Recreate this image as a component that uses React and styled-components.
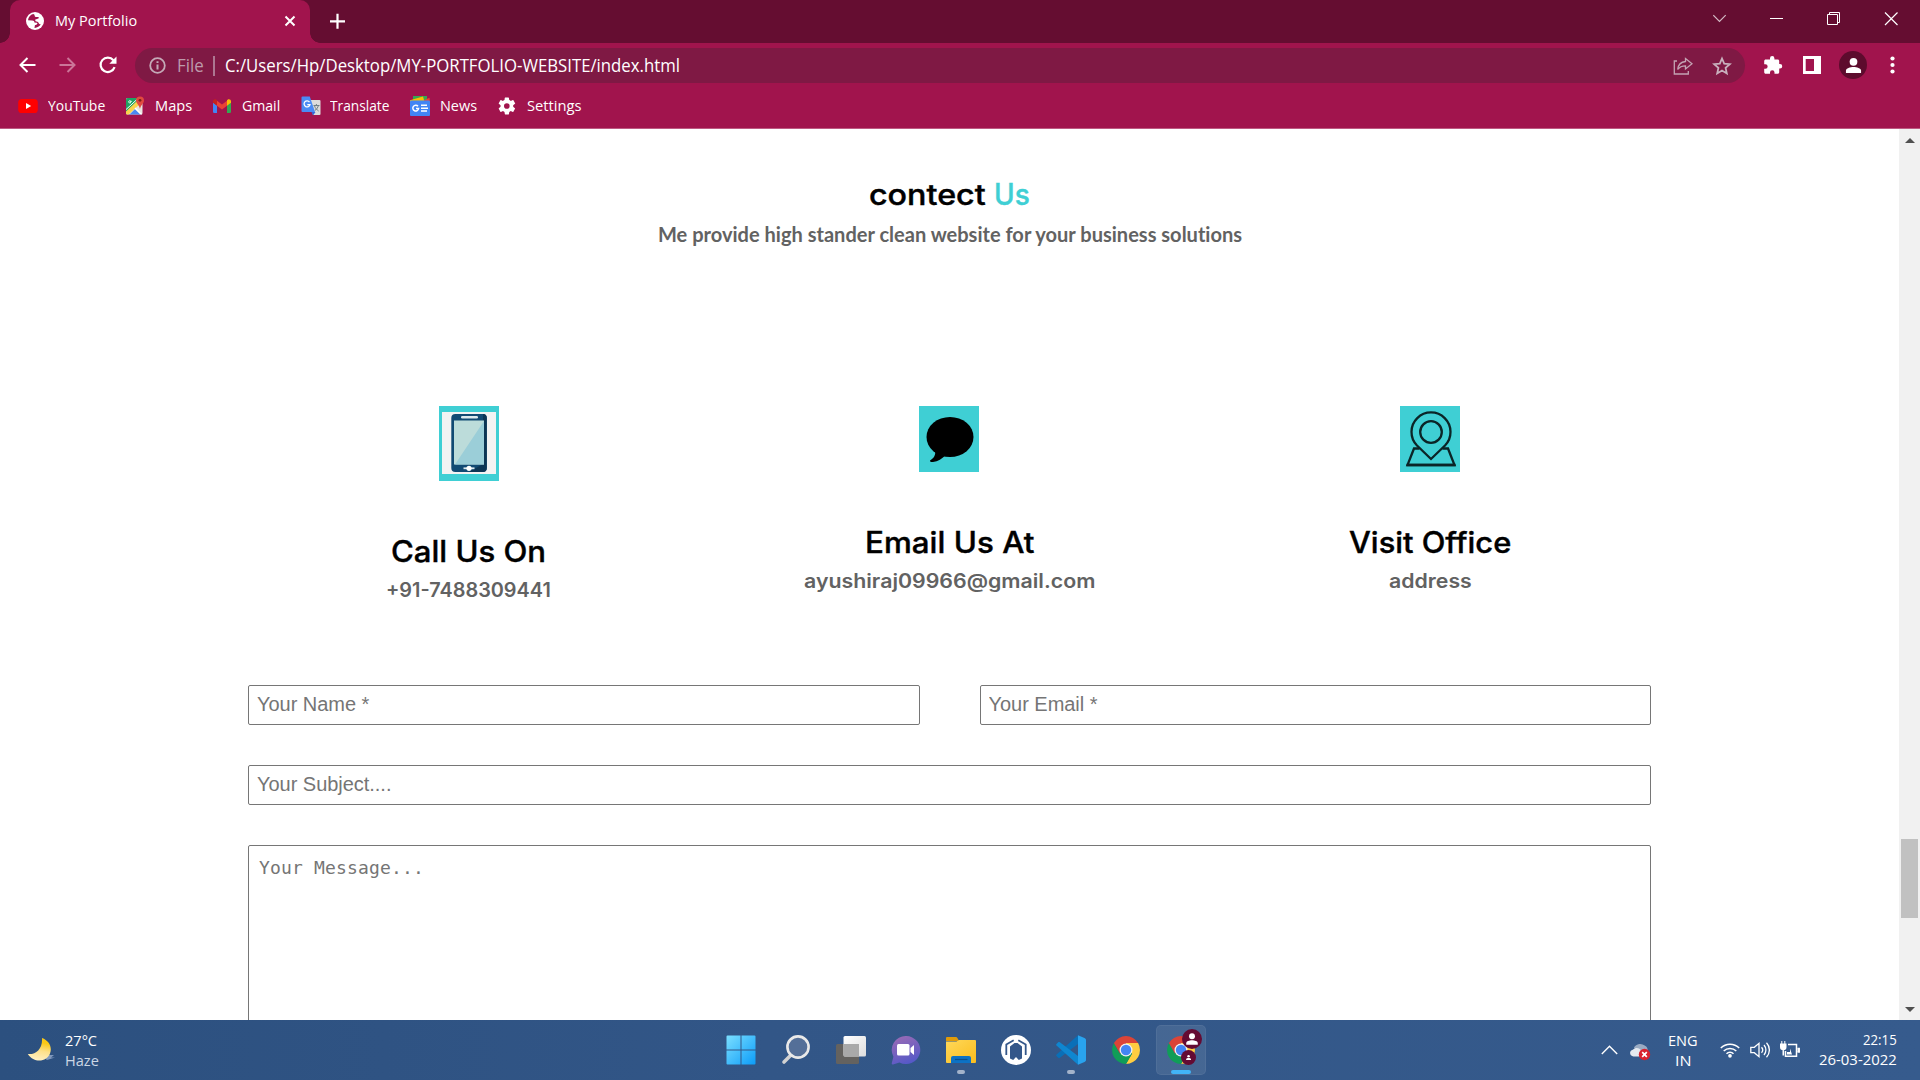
import React, { useLayoutEffect, useRef } from "react";
import styled, { createGlobalStyle } from "styled-components";

const ui = `"Open Sans", "Noto Sans", sans-serif`;
const accent = "#3fcfd4";

const GlobalStyle = createGlobalStyle`
  * { box-sizing: border-box; }
  html, body { margin: 0; overflow: hidden; background: #fff; }
  body { font-family: ${ui}; }
  svg { display: block; flex: none; }
`;

const Line = styled.span`
  display: block;
  flex: none;
  width: ${(p) => p.$w}px;
  white-space: nowrap;
  text-align: left;
`;
const Glyphs = styled.span`
  display: inline-block;
  vertical-align: top;
  transform-origin: 0 50%;
`;

/* A single line of text whose letters are widened or condensed to the given width. */
function Track({ w, children }) {
  const ref = useRef(null);
  useLayoutEffect(() => {
    const inner = ref.current;
    inner.style.transform = `scaleX(${w / inner.offsetWidth})`;
  }, [w, children]);
  return (
    <Line $w={w}>
      <Glyphs ref={ref}>{children}</Glyphs>
    </Line>
  );
}

const Screen = styled.div`
  width: 1920px;
  height: 1080px;
  display: flex;
  flex-direction: column;
  overflow: hidden;
`;

/* ---------- browser chrome ---------- */
const TabStrip = styled.header`
  height: 43px;
  display: flex;
  background: #650d31;
  padding-left: 10px;
`;
const Tab = styled.div`
  position: relative;
  width: 300px;
  height: 43px;
  display: flex;
  align-items: center;
  padding: 0 14px 1px 16px;
  border-radius: 10px 10px 0 0;
  background: #a1144d;
  color: #fff;
  font-size: 15px;
  line-height: 20px;
  &::before,
  &::after {
    content: "";
    position: absolute;
    bottom: 0;
    width: 10px;
    height: 10px;
  }
  &::before {
    left: -10px;
    background: radial-gradient(circle at 0 0, transparent 9.5px, #a1144d 10px);
  }
  &::after {
    right: -10px;
    background: radial-gradient(circle at 100% 0, transparent 9.5px, #a1144d 10px);
  }
`;
const TabTitle = styled.div`
  flex: 1;
  padding: 0 0 2px 10.5px;
`;
const NewTab = styled.div`
  padding: 13px 0 0 20px;
`;
const WindowControls = styled.div`
  display: flex;
  align-items: flex-start;
  gap: 43px;
  margin-left: auto;
  padding: 12px 22px 0 0;
`;
const Toolbar = styled.div`
  height: 44px;
  display: flex;
  align-items: center;
  background: #a1144d;
  padding: 0 20px 0 18px;
`;
const NavButtons = styled.div`
  display: flex;
  gap: 20px;
  width: 117px;
`;
const AddressBar = styled.div`
  width: 1610px;
  height: 35px;
  margin-top: 1px;
  display: flex;
  align-items: center;
  border-radius: 18px;
  background: #7f1944;
  padding: 0 13px 0 14px;
  color: #fff;
  font-size: 17.5px;
  line-height: 24px;
  & > span { padding-bottom: 2px; }
`;
const Scheme = styled.span`
  color: #bd9aab;
  padding-left: 11px;
`;
const Divider = styled.span`
  width: 2px;
  height: 20px;
  margin: 0 10px 0 9px;
  background: #ad7791;
`;
const AddressActions = styled.div`
  display: flex;
  align-items: center;
  gap: 19px;
  margin-left: auto;
`;
const ToolbarActions = styled.div`
  display: flex;
  align-items: center;
  padding-left: 18px;
`;
const PanelIcon = styled.svg`
  margin-left: 20px;
`;
const Avatar = styled.div`
  width: 28px;
  height: 28px;
  margin: 0 23px 0 18px;
  border-radius: 50%;
  background: #5d0b2d;
  display: grid;
  place-items: center;
`;
const Bookmarks = styled.nav`
  height: 42px;
  display: flex;
  align-items: center;
  gap: 20.4px;
  padding: 0 18px 4px;
  background: #a1144d;
  border-bottom: 1px solid #bd5a82;
`;
const Bookmark = styled.div`
  display: flex;
  align-items: center;
  gap: 9.5px;
  color: #fff;
  font-size: 15px;
  line-height: 20px;
  & > span { padding-bottom: 2px; }
`;

/* ---------- page ---------- */
const Viewport = styled.div`
  height: 891px;
  display: flex;
`;
const Page = styled.main`
  width: 1899px;
  height: 891px;
  overflow: hidden;
  display: flex;
  flex-direction: column;
  align-items: center;
  padding-top: 43px;
`;
const Title = styled.h1`
  margin: 0;
  display: flex;
  gap: 8px;
  font: 500 29.5px/45px Inter, sans-serif;
  -webkit-text-stroke: 0.4px;
  color: #000;
`;
const Accent = styled.span`
  color: ${accent};
`;
const Subtitle = styled.p`
  margin: 2px 0 157px;
  font: 700 20px/30px Lato, sans-serif;
  font-variant-ligatures: none;
  color: #626262;
`;
const Cards = styled.section`
  width: 1443px;
  display: grid;
  grid-template-columns: 481px 480px 482px;
  align-items: start;
`;
const Card = styled.article`
  display: flex;
  flex-direction: column;
  align-items: center;
`;
const CardIcon = styled.div`
  width: 60px;
  height: ${(p) => p.$h}px;
  background: ${accent};
`;
const CardTitle = styled.h2`
  margin: 50px 0 4px;
  font: 500 29.5px/40px Inter, sans-serif;
  -webkit-text-stroke: 0.4px;
  color: #000;
`;
const CardText = styled.p`
  margin: 0;
  font: 600 19.5px/30px Inter, sans-serif;
  color: #626262;
`;
const Form = styled.form`
  width: 1403px;
  margin-top: 80px;
  display: grid;
  grid-template-columns: 1fr 1fr;
  gap: 40px 60px;
`;
const Field = styled.input`
  grid-column: ${(p) => (p.$wide ? "1 / -1" : "auto")};
  width: 100%;
  height: 40px;
  border: 1px solid #767676;
  border-radius: 2px;
  padding: 0 8px 2px;
  font: 20px "Liberation Sans", Arial, sans-serif;
  letter-spacing: -0.03px;
  &::placeholder { color: #757575; }
`;
const Message = styled.textarea`
  grid-column: 1 / -1;
  height: 240px;
  border: 1px solid #767676;
  border-radius: 2px;
  padding: 10px;
  resize: none;
  font: 18px/24px "DejaVu Sans Mono", monospace;
  letter-spacing: 0.16px;
  &::placeholder { color: #757575; }
`;
const Scrollbar = styled.aside`
  width: 21px;
  display: flex;
  flex-direction: column;
  align-items: center;
  justify-content: space-between;
  background: #f1f1f1;
  padding: 9px 0 8px;
`;
const Thumb = styled.div`
  width: 17px;
  height: 79px;
  margin-top: 606px;
  background: #c1c1c1;
`;
const ArrowMark = styled.div`
  width: 0;
  border: 5px solid transparent;
  border-top: ${(p) => (p.$up ? "0" : "5px solid #505050")};
  border-bottom: ${(p) => (p.$up ? "5px solid #505050" : "0")};
`;

/* ---------- taskbar ---------- */
const Taskbar = styled.footer`
  height: 60px;
  display: grid;
  grid-template-columns: 715.5px 490px 1fr;
  background: linear-gradient(90deg, #2c507f, #325687 40%, #365b8d);
  color: #fff;
  font-size: 15px;
  line-height: 20px;
`;
const Weather = styled.div`
  display: flex;
  align-items: center;
  gap: 9px;
  padding-left: 27px;
`;
const Stack = styled.div`
  display: flex;
  flex-direction: column;
  align-items: ${(p) => p.$align || "flex-start"};
  padding-bottom: ${(p) => p.$lift || 0}px;
`;
const Muted = styled.div`
  color: #ccd7e5;
`;
const Apps = styled.div`
  display: flex;
  align-items: center;
  gap: 5px;
`;
const AppTile = styled.div`
  position: relative;
  width: 50px;
  height: 50px;
  display: grid;
  place-items: center;
  border-radius: 5px;
  background: ${(p) => (p.$active ? "rgba(255,255,255,.09)" : "transparent")};
  box-shadow: ${(p) => (p.$active ? "inset 0 0 0 1px rgba(255,255,255,.06)" : "none")};
`;
const Indicator = styled.i`
  position: absolute;
  bottom: 1px;
  left: 50%;
  width: ${(p) => (p.$active ? 20 : 8)}px;
  height: 4px;
  margin-left: ${(p) => (p.$active ? -10 : -4)}px;
  border-radius: 2px;
  background: ${(p) => (p.$active ? "#42b4f7" : "#a3b3ca")};
`;
const Tray = styled.div`
  display: flex;
  align-items: center;
  justify-content: flex-end;
  padding-right: 23.5px;
`;
const CloudIcon = styled.svg`
  margin: 2px 17px 0 11px;
`;
const TrayIcons = styled.div`
  display: flex;
  gap: 10px;
  margin: 0 19.5px 0 22px;
`;

/* ---------- icons ---------- */
const Person = ({ size = 18 }) => (
  <svg width={size} height={size} viewBox="0 0 18 18" fill="#fff">
    <circle cx="9" cy="5.1" r="4.1" />
    <path d="M1 17v-2.4C1 11.8 5.5 10.6 9 10.6s8 1.2 8 4V17z" />
  </svg>
);

const Globe = () => (
  <svg width="18" height="18" viewBox="0 0 18 18">
    <circle cx="9" cy="9" r="9" fill="#fff" />
    <path d="M7.2 2.1C4.4 2.8 2.3 5.2 2 8.3l4.2.2c1.5.1 2.3.9 2.2 2l2.3.2c.9.2.8 1.2.1 1.8l-1.9.8-.4 2.6c2.7.1 5-1.4 6.3-3.6-.9.1-1.7-.3-2-1.1-.4-1-1.3-1.6-2.9-1.6l-1-1.8c1.6-.2 2.2-1.1 3.6-1.2l.2-1.7c-1.7.3-3.3.2-3.9-.7-.5-.8.4-1.6-1.6-2.1z" fill="#a1144d" />
  </svg>
);

const Chrome = ({ size = 28 }) => (
  <svg width={size} height={size} viewBox="0 0 28 28">
    <path d="M14 14V7h12.1A14 14 0 0 1 14 28l6.1-10.5z" fill="#ffcd40" />
    <path d="M14 14l6.1 3.5L14 28A14 14 0 0 1 1.9 7l6 10.5z" fill="#109d58" />
    <path d="M1.9 7A14 14 0 0 1 26.1 7H14z" fill="#db4437" />
    <path d="M1.9 7 8 17.4 14 7z" fill="#db4437" />
    <circle cx="14" cy="14" r="6.5" fill="#f1f1f1" />
    <circle cx="14" cy="14" r="5.2" fill="#4285f4" />
  </svg>
);

const icons = {
  youtube: (
    <svg width="20" height="20" viewBox="0 0 20 20">
      <rect x="0.2" y="3" width="19.6" height="14" rx="3.6" fill="#f00" />
      <path d="M8 7v6l5.2-3z" fill="#fff" />
    </svg>
  ),
  maps: (
    <svg width="20" height="20" viewBox="0 0 20 20">
      <clipPath id="mapClip"><rect x="1" y="2" width="16.5" height="16.5" rx="1.5" /></clipPath>
      <g clipPath="url(#mapClip)">
        <path d="M1 2h17v17H1z" fill="#e8e6e0" />
        <path d="M1 2h16L1 17z" fill="#1fa463" />
        <path d="M4 19l6-6 6 6z" fill="#4a89f3" />
        <path d="M1 15.5 13 4l3 3L3 19H1z" fill="#fbd34c" />
        <path d="M0 14.5 14 1.5" stroke="#fff" strokeWidth="1" />
        <path d="m10 12 7 7" stroke="#fff" strokeWidth="1.4" />
      </g>
      <path d="M6.9 5.4H5.2v1h.7a1.2 1.2 0 1 1-.2-1.4" fill="none" stroke="#fff" strokeWidth=".8" />
      <path d="M15 .4a4 4 0 0 1 4 4c0 3-3.2 4-4 8.6-.8-4.6-4-5.6-4-8.6a4 4 0 0 1 4-4z" fill="#e04a3f" />
      <circle cx="15" cy="4.3" r="1.4" fill="#7c2119" />
    </svg>
  ),
  gmail: (
    <svg width="20" height="20" viewBox="0 0 20 20">
      <path d="M1 6.5l4 3V17H2.2A1.2 1.2 0 0 1 1 15.8z" fill="#4285f4" />
      <path d="M19 6.5l-4 3V17h2.8a1.2 1.2 0 0 0 1.2-1.2z" fill="#34a853" />
      <path d="M5 4.8l5 3.8 5-3.8v5L10 13.5 5 9.8z" fill="#ea4335" />
      <path d="M1 5.3C1 3.3 3.2 2.7 4.4 3.7l.6.5v5.5L1 6.8z" fill="#c5221f" />
      <path d="M19 5.3c0-2-2.2-2.6-3.4-1.6l-.6.5v5.5l4-2.9z" fill="#fbbc04" />
    </svg>
  ),
  translate: (
    <svg width="20" height="20" viewBox="0 0 20 20">
      <path d="M8 4h10.5a1 1 0 0 1 1 1v13a1 1 0 0 1-1 1H12z" fill="#dcdcdc" />
      <path d="M10.5 16h4L12 19.5z" fill="#3367d6" />
      <path d="M1.5.6h7.3L14 16H1.5a1 1 0 0 1-1-1V1.6a1 1 0 0 1 1-1z" fill="#4a8bf5" />
      <path d="M8.5 6.1A3 3 0 1 0 9 8.6H6.3" fill="none" stroke="#fff" strokeWidth="1.3" />
      <path d="M12.5 9.5h6M15.4 8v1.5M17.4 9.5c-.4 2-2 4-3.6 5M13.6 10c.5 2 2.4 4 4 5" fill="none" stroke="#6e7f87" strokeWidth="1" />
    </svg>
  ),
  news: (
    <svg width="20" height="20" viewBox="0 0 20 20">
      <path d="M3 0h14v5H3z" fill="#35a853" />
      <path d="M19.5 1.7 20 6H10z" fill="#ea4335" />
      <path d="M0 4.3 13 .6 14.5 6H0z" fill="#fbbc04" />
      <rect y="4.6" width="20" height="15.4" rx="1" fill="#4285f4" />
      <path d="M8 10.3a2.9 2.9 0 1 0 .6 2.2H6" fill="none" stroke="#fff" strokeWidth="1.5" />
      <path d="M11 9.3h6M11 12.2h7M11 15.1h6" stroke="#fff" strokeWidth="1.5" />
    </svg>
  ),
  settings: (
    <svg width="20" height="20" viewBox="0 0 24 24">
      <path fill="#fff" fillRule="evenodd" d="M19.4 13a7.5 7.5 0 0 0 0-2l2.2-1.7c.2-.2.3-.5.1-.7l-2-3.5a.5.5 0 0 0-.7-.2l-2.5 1a7.5 7.5 0 0 0-1.8-1L14.3 2.3a.5.5 0 0 0-.5-.4h-4a.5.5 0 0 0-.5.4L9 4.9c-.6.2-1.2.6-1.8 1l-2.5-1a.5.5 0 0 0-.6.2l-2 3.5c-.1.2-.1.5.1.7L4.3 11a7.5 7.5 0 0 0 0 2l-2.1 1.7c-.2.2-.3.5-.1.7l2 3.5c.1.2.4.3.6.2l2.5-1c.5.4 1.2.8 1.8 1l.4 2.6c0 .3.2.4.5.4h4c.2 0 .4-.2.5-.4l.3-2.6a7.5 7.5 0 0 0 1.8-1l2.5 1c.2.1.5 0 .6-.2l2-3.5c.1-.2.1-.5-.1-.7zM11.8 15.4a3.4 3.4 0 1 1 0-6.8 3.4 3.4 0 0 1 0 6.8z" />
    </svg>
  ),
};

const bookmarks = [
  ["youtube", "YouTube", 57.5],
  ["maps", "Maps", 37],
  ["gmail", "Gmail", 38.5],
  ["translate", "Translate", 59.5],
  ["news", "News", 37.5],
  ["settings", "Settings", 55],
];

const PhonePicture = () => (
  <svg width="60" height="75" viewBox="0 0 60 75">
    <rect x="3" y="6" width="54" height="62" fill="#f3f3f3" />
    <rect x="12.3" y="8" width="35.5" height="58" rx="4" fill="#114a73" />
    <path d="M44 8a4 4 0 0 1 3.8 4v50a4 4 0 0 1-4 4H30l14-8z" fill="#0c3554" />
    <rect x="15" y="14.5" width="30" height="44" fill="#bcdcda" />
    <path d="M45 15v43.5H16z" fill="#9bced8" />
    <rect x="22" y="10" width="17" height="2.6" rx="1.3" fill="#dce9ee" />
    <path d="M24.5 62.3h11" stroke="#dce9ee" strokeWidth="1.8" />
    <circle cx="30" cy="62.3" r="2.6" fill="#fff" />
  </svg>
);
const BubblePicture = () => (
  <svg width="60" height="66" viewBox="0 0 60 66">
    <ellipse cx="31" cy="31" rx="23.5" ry="20" />
    <path d="M16 44c1 5-1 8-5 10.5 0 1.5 1 1.6 3 1.5 5-.5 9-3.5 13-7z" />
  </svg>
);
const PinPicture = () => (
  <svg width="60" height="66" viewBox="0 0 60 66" fill="none" stroke="#0b2527" strokeWidth="2.3">
    <circle cx="31" cy="26" r="10.8" />
    <path d="M31 53 17 39.5a19.5 19.5 0 1 1 28 0z" />
    <path d="M19.5 42.500H14L7.5 59h47L48 42.500h-5.500" />
    <path d="M6.5 59h49" strokeWidth="2.5" />
  </svg>
);

const contacts = [
  { h: 75, picture: <PhonePicture />, title: "Call Us On", tw: 155, text: "+91-7488309441", w: 165 },
  { h: 66, picture: <BubblePicture />, title: "Email Us At", tw: 169, text: "ayushiraj09966@gmail.com", w: 291 },
  { h: 66, picture: <PinPicture />, title: "Visit Office", tw: 162, text: "address", w: 83 },
];

const appIcons = [
  <svg width="30" height="30" viewBox="0 0 30 30">
    <defs><linearGradient id="win" gradientUnits="userSpaceOnUse" x1="0" y1="0" x2="30" y2="30"><stop stopColor="#7de0ff" /><stop offset="1" stopColor="#0a9bf8" /></linearGradient></defs>
    <path fill="url(#win)" d="M1.5.5h13v14h-14v-13a1 1 0 0 1 1-1zM15.5.5h13a1 1 0 0 1 1 1v13h-14zM.5 15.5h14v14h-13a1 1 0 0 1-1-1zM15.5 15.5h14v13a1 1 0 0 1-1 1h-13z" />
  </svg>,
  <svg width="30" height="30" viewBox="0 0 30 30" fill="none">
    <path d="M10.5 19.5 3 27" stroke="#d2d2d2" strokeWidth="3.6" strokeLinecap="round" />
    <circle cx="17" cy="12" r="10.6" fill="#546f98" stroke="#e9e9e9" strokeWidth="2.6" />
  </svg>,
  <svg width="30" height="30" viewBox="0 0 30 30">
    <defs>
      <linearGradient id="tv" x1="0" y1="0" x2="1" y2="1"><stop stopColor="#fff" /><stop offset="1" stopColor="#ddd" /></linearGradient>
    </defs>
    <rect y="9" width="23" height="20" rx="1.5" fill="#64625f" />
    <rect x="7.5" y="1" width="22.5" height="20.5" rx="1.5" fill="url(#tv)" />
    <path d="M7.5 9H23v12.5H9A1.5 1.5 0 0 1 7.5 20z" fill="#a9a9a9" />
  </svg>,
  <svg width="30" height="30" viewBox="0 0 30 30">
    <defs><linearGradient id="chat" x1=".2" y1="0" x2=".6" y2="1"><stop stopColor="#9a6bb5" /><stop offset="1" stopColor="#5358c8" /></linearGradient></defs>
    <path d="M15 1a14.2 14 0 1 1-6.5 26.4L2 29.4c-1 .2-1.5-.5-1.2-1.4l1.6-6.3A14 14 0 0 1 15 1z" fill="url(#chat)" />
    <rect x="6" y="9" width="12.5" height="11.5" rx="1.5" fill="#fff" />
    <path d="M19.5 13l3.5-3v10l-3.5-3z" fill="#fff" />
  </svg>,
  <svg width="30" height="30" viewBox="0 0 30 30">
    <defs>
      <linearGradient id="fold" x1="0" y1="0" x2="1" y2="1"><stop stopColor="#ffd85a" /><stop offset="1" stopColor="#fbbd1d" /></linearGradient>
    </defs>
    <path d="M0 3a1 1 0 0 1 1-1h8.5c1 0 1.5.4 2.2 1.4L13 6H0z" fill="#df9b0a" />
    <path d="M0 6.5h10.5L13 5h16a1 1 0 0 1 1 1v21a1 1 0 0 1-1 1H1a1 1 0 0 1-1-1z" fill="url(#fold)" />
    <path d="M5 28v-5a2 2 0 0 1 2-2h16a2 2 0 0 1 2 2v5z" fill="#0d72c4" />
    <path d="M9 24.5h12.5" stroke="#0a4f8d" strokeWidth="1.2" />
  </svg>,
  <svg width="30" height="30" viewBox="0 0 30 30">
    <circle cx="15" cy="15" r="15" fill="#fff" />
    <path d="M9 23.5V11.500L13.500 8h3L21 11.500v12L17.800 25 15 22l-2.800 3z" fill="#34578a" />
    <path d="M12.700 5.200 5.300 9.500v10.500M17.300 5.200l7.400 4.300v10.500" fill="none" stroke="#34578a" strokeWidth="1.8" />
  </svg>,
  <svg width="30" height="30" viewBox="0 0 30 30">
    <path d="M22 .2.5 19.4c-.5.5-.5 1.2 0 1.7l1.7 1.7c.5.4 1.2.4 1.7 0L22 9z" fill="#0a6fb7" />
    <path d="M22 29.8.5 10.6c-.5-.5-.5-1.2 0-1.7l1.7-1.7c.5-.4 1.2-.4 1.7 0L22 21z" fill="#0f86d0" />
    <path d="M22 .2 28.5 3c1 .5 1.5 1.2 1.5 2.2v19.6c0 1-.5 1.7-1.5 2.2L22 29.8z" fill="#29a3ee" />
  </svg>,
  <Chrome />,
  <svg width="50" height="50" viewBox="0 0 50 50">
    <g transform="translate(11 11)"><Chrome /></g>
    <circle cx="36" cy="14" r="10" fill="#640b33" />
    <g transform="translate(29.5 7.5)"><Person size={13} /></g>
    <circle cx="32.5" cy="32.5" r="7.5" fill="#640b33" />
    <g transform="translate(29.8 29.8)"><Person size={5.5} /></g>
  </svg>,
];

export default function App() {
  return (
    <Screen>
      <GlobalStyle />
      <TabStrip>
        <Tab>
          <Globe />
          <TabTitle><Track w={82}>My Portfolio</Track></TabTitle>
          <svg width="12" height="12" viewBox="0 0 12 12" stroke="#fff" strokeWidth="2"><path d="M1.5 1.5l9 9M10.5 1.5l-9 9" /></svg>
        </Tab>
        <NewTab>
          <svg width="15" height="16" viewBox="0 0 15 16" stroke="#fff" strokeWidth="2.2"><path d="M7.5 .8v15M0 8.3h15" /></svg>
        </NewTab>
        <WindowControls>
          <svg width="14" height="14" viewBox="0 0 14 14" fill="none" stroke="#d3bac5" strokeWidth="1.2"><path d="M.3 3.2 6.5 9.5l6.2-6.3" /></svg>
          <svg width="14" height="14" viewBox="0 0 14 14" stroke="#fff"><path d="M0 6.5h13" /></svg>
          <svg width="14" height="14" viewBox="0 0 14 14" fill="none" stroke="#fff"><path d="M.5 2.5h10v10H.5zM2.5 2.5v-2h10v10h-2" /></svg>
          <svg width="14" height="14" viewBox="0 0 14 14" stroke="#fff" strokeWidth="1.2"><path d="M1 .5l12.5 12.5M13.5.5 1 13" /></svg>
        </WindowControls>
      </TabStrip>
      <Toolbar>
        <NavButtons>
          <svg width="20" height="20" viewBox="0 0 20 20" fill="none" stroke="#fff" strokeWidth="2"><path d="M17.5 10H3M9.5 3 2.5 10l7 7" /></svg>
          <svg width="20" height="20" viewBox="0 0 20 20" fill="none" stroke="#cb7598" strokeWidth="2"><path d="M1.5 10H16M9.5 3l7 7-7 7" /></svg>
          <svg width="20" height="20" viewBox="0 0 20 20" fill="none" stroke="#fff" strokeWidth="2.2"><path d="M16.6 12.2A7.2 7.2 0 1 1 15.4 5.3" /><path d="M18.5 1.6v7.2h-7.2z" fill="#fff" stroke="none" /></svg>
        </NavButtons>
        <AddressBar>
          <svg width="17" height="17" viewBox="0 0 17 17" fill="none" stroke="#c4a9b7" strokeWidth="1.8"><circle cx="8.5" cy="8.5" r="7.3" /><path d="M8.5 7.5v5M8.5 4.2V6" strokeWidth="2" /></svg>
          <Scheme><Track w={27}>File</Track></Scheme>
          <Divider />
          <Track w={455}>C:/Users/Hp/Desktop/MY-PORTFOLIO-WEBSITE/index.html</Track>
          <AddressActions>
            <svg width="20" height="20" viewBox="0 0 20 20" fill="none" stroke="#c4a3b3" strokeWidth="1.3"><path d="M4 5H1.3v13h14v-3" /><path d="M12.5 2.5 19 7.7l-6.5 5.2V9.8c-3.5 0-6 1-7.8 3.7.4-4.5 3-7.5 7.8-8z" /></svg>
            <svg width="20" height="20" viewBox="0 0 20 20" fill="none" stroke="#c9b0bd" strokeWidth="1.8"><path d="m10 2.5 2.2 5.2 5.6.5-4.2 3.7 1.2 5.5L10 14.5l-4.8 2.9 1.2-5.5L2.2 8.2l5.6-.5z" /></svg>
          </AddressActions>
        </AddressBar>
        <ToolbarActions>
          <svg width="20" height="20" viewBox="0 0 20 20" fill="#fff"><path d="M7 3.3a2.2 2.2 0 0 1 4.4 0V4.5h3.3c.8 0 1.5.6 1.5 1.5v3h.8a2.2 2.2 0 0 1 0 4.5h-.8v3.7c0 .8-.7 1.5-1.5 1.5h-3.2v-1.2a2.2 2.2 0 0 0-4.5 0v1.2H2.7c-.8 0-1.5-.7-1.5-1.5v-3.4h1.2a2.2 2.2 0 0 0 0-4.5H1.2V6c0-.9.7-1.5 1.5-1.5H7z" /></svg>
          <PanelIcon width="18" height="18" viewBox="0 0 18 18"><path fill="#fff" fillRule="evenodd" d="M0 0h18v18H0zM2.7 3v12h8.3V3z" /></PanelIcon>
          <Avatar><Person size={17} /></Avatar>
          <svg width="5" height="18" viewBox="0 0 5 18" fill="#fff"><circle cx="2.5" cy="2.5" r="2.1" /><circle cx="2.5" cy="9" r="2.1" /><circle cx="2.5" cy="15.5" r="2.1" /></svg>
        </ToolbarActions>
      </Toolbar>
      <Bookmarks>
        {bookmarks.map(([icon, label, w]) => (
          <Bookmark key={label}>
            {icons[icon]}
            <Track w={w}>{label}</Track>
          </Bookmark>
        ))}
      </Bookmarks>

      <Viewport>
        <Page>
          <Title>
            <Track w={117}>contect</Track>
            <Accent><Track w={36}>Us</Track></Accent>
          </Title>
          <Subtitle><Track w={584}>Me provide high stander clean website for your business solutions</Track></Subtitle>
          <Cards>
            {contacts.map((c) => (
              <Card key={c.title}>
                <CardIcon $h={c.h}>{c.picture}</CardIcon>
                <CardTitle><Track w={c.tw}>{c.title}</Track></CardTitle>
                <CardText><Track w={c.w}>{c.text}</Track></CardText>
              </Card>
            ))}
          </Cards>
          <Form>
            <Field placeholder="Your Name *" />
            <Field placeholder="Your Email *" />
            <Field $wide placeholder="Your Subject...." />
            <Message placeholder="Your Message..." />
          </Form>
        </Page>
        <Scrollbar>
          <ArrowMark $up />
          <Thumb />
          <ArrowMark />
        </Scrollbar>
      </Viewport>

      <Taskbar>
        <Weather>
          <svg width="29" height="28" viewBox="0 0 29 28">
            <defs><linearGradient id="moon" x1=".6" y1="0" x2=".4" y2="1"><stop offset=".2" stopColor="#fbc916" /><stop offset=".55" stopColor="#fde08a" /><stop offset="1" stopColor="#fff0c4" /></linearGradient></defs>
            <path d="M14 19h13l-3 2.5h4L20 24z" fill="#8098bd" />
            <path d="M15 2c7 2.5 10.5 9 8 15.5C20.5 25 8 28.5.8 18 8.5 19 15.8 13 15 2z" fill="url(#moon)" />
          </svg>
          <Stack $lift={1}>
            <Track w={32}>27°C</Track>
            <Muted><Track w={34}>Haze</Track></Muted>
          </Stack>
        </Weather>
        <Apps>
          {appIcons.map((icon, i) => (
            <AppTile key={i} $active={i === 8}>
              {icon}
              {(i === 4 || i === 6 || i === 8) && <Indicator $active={i === 8} />}
            </AppTile>
          ))}
        </Apps>
        <Tray>
          <svg width="17" height="10" viewBox="0 0 17 10" fill="none" stroke="#fff" strokeWidth="1.4"><path d="M.8 9 8.5 1.3 16.2 9" /></svg>
          <CloudIcon width="22" height="20" viewBox="0 0 22 20">
            <path d="M5 6.5A7 6 0 0 1 16.5 5c3 2 2.5 6 .5 7.5H8z" fill="#9aabc3" />
            <path d="M4.5 15.5C.5 15.5-.3 9.8 3.8 8.8 7 5.5 11 7 12 9.5l6 2.5-3 3.5z" fill="#e4e9ef" />
            <circle cx="15.5" cy="13.5" r="5.7" fill="#d9222f" />
            <path d="m13.2 11.2 4.6 4.6M17.8 11.2l-4.6 4.6" stroke="#fff" strokeWidth="1.7" />
          </CloudIcon>
          <Stack $align="center" $lift={1}>
            <Track w={30}>ENG</Track>
            <Track w={16}>IN</Track>
          </Stack>
          <TrayIcons>
            <svg width="20" height="20" viewBox="0 0 20 20" fill="none" stroke="#fff" strokeWidth="1.5"><path d="M.8 8a13 13 0 0 1 18.4 0M3.7 11a9 9 0 0 1 12.6 0M6.5 13.8a5 5 0 0 1 7 0" /><circle cx="10" cy="15.8" r="1.1" fill="#fff" /></svg>
            <svg width="20" height="20" viewBox="0 0 20 20" fill="none" stroke="#fff" strokeWidth="1.3"><path d="M.8 7.3v5.4h3.5l4.7 4V3.3l-4.7 4z" /><path d="M11.5 7.3a4 4 0 0 1 0 5.4M14 5a7.5 7.5 0 0 1 0 10M16.5 2.8a10.5 10.5 0 0 1 0 14.4" /></svg>
            <svg width="20" height="20" viewBox="0 0 20 20" fill="none" stroke="#fff" strokeWidth="1.5"><path d="M8 4.5h8.5v11.7H5.5V11" /><path d="M17.5 8.5h1.7v3.5h-1.7" fill="#fff" /><path d="M0 3.5h6.5V7a3 3 0 0 1-6.5 0zM2.5 9h1.6v6.5H2.5zM1.3 1h1v3h-1zM4.3 1h1v3h-1z" fill="#fff" stroke="none" /><path d="M7 12h3V8.5L12 14.5H7z" fill="#fff" stroke="none" /></svg>
          </TrayIcons>
          <Stack $align="flex-end" $lift={2}>
            <Track w={33.5}>22:15</Track>
            <Track w={77.5}>26-03-2022</Track>
          </Stack>
        </Tray>
      </Taskbar>
    </Screen>
  );
}
